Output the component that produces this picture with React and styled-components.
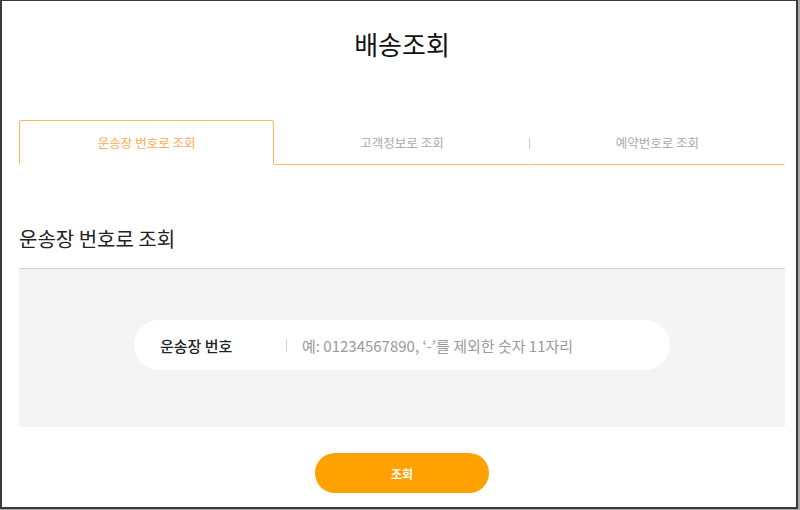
import React, { useState } from "react";
import styled, { createGlobalStyle } from "styled-components";

const FONT = `"Noto Sans CJK KR", "Noto Sans", sans-serif`;

const TABS = ["운송장 번호로 조회", "고객정보로 조회", "예약번호로 조회"];

const GlobalStyle = createGlobalStyle`
  html, body {
    margin: 0;
    padding: 0;
    background: #a8a8a8;
  }
  body {
    font-family: ${FONT};
  }
  * {
    box-sizing: border-box;
  }
`;

const App = () => {
  const [active, setActive] = useState(0);
  return (
    <>
      <GlobalStyle />
      <Frame>
        <Title>배송조회</Title>
        <TabBar>
          {TABS.map((label, i) => (
            <Tab
              key={label}
              active={i === active}
              divider={i === 2 && active !== 1 && active !== 2}
              onClick={() => setActive(i)}
            >
              {label}
            </Tab>
          ))}
        </TabBar>
        <Heading>운송장 번호로 조회</Heading>
        <SearchBox>
          <Pill>
            <Label>운송장 번호</Label>
            <Separator />
            <Input placeholder="예: 01234567890, ‘-’를 제외한 숫자 11자리" />
          </Pill>
        </SearchBox>
        <Actions>
          <SubmitButton>조회</SubmitButton>
        </Actions>
      </Frame>
    </>
  );
};

const Frame = styled.div`
  width: 798px;
  height: 509px;
  background: #fff;
  border: 2px solid #3a3a3a;
  border-top-width: 1px;
  padding: 0 11px 0 17px;
  display: flex;
  flex-direction: column;
`;

const Title = styled.h1`
  margin: 0;
  padding-top: 27px;
  font-size: 26px;
  line-height: 32px;
  font-weight: 400;
  color: #111;
  text-align: center;
`;

const TabBar = styled.div`
  display: flex;
  margin-top: 60px;
`;

const Tab = styled.div`
  position: relative;
  flex: 1;
  height: 45px;
  display: flex;
  align-items: center;
  justify-content: center;
  font-size: 12.5px;
  cursor: pointer;
  color: ${({ active }) => (active ? "#ffa94d" : "#a9a9a9")};
  border: 1px solid ${({ active }) => (active ? "#ffb65c" : "transparent")};
  border-bottom: 1px solid ${({ active }) => (active ? "#fff" : "#ffb65c")};
  border-radius: ${({ active }) => (active ? "3px 3px 0 0" : "0")};

  &::before {
    content: "";
    display: ${({ divider }) => (divider ? "block" : "none")};
    position: absolute;
    left: -2px;
    top: 17px;
    width: 1px;
    height: 11px;
    background: #c8c8c8;
  }
`;

const Heading = styled.h2`
  margin: 60px 0 0;
  padding-bottom: 15px;
  font-size: 20px;
  line-height: 28px;
  font-weight: 400;
  color: #222;
`;

const SearchBox = styled.div`
  height: 159px;
  border-top: 1px solid #cfcfcf;
  background: #f4f4f4;
  display: flex;
  justify-content: center;
  padding-top: 51px;
`;

const Pill = styled.div`
  width: 536px;
  height: 50px;
  border-radius: 25px;
  background: #fff;
  display: flex;
  align-items: center;
  padding-left: 26px;
`;

const Label = styled.span`
  width: 126px;
  font-size: 15px;
  font-weight: 500;
  color: #222;
`;

const Separator = styled.span`
  width: 1px;
  height: 13px;
  background: #d4d4d4;
`;

const Input = styled.input`
  flex: 1;
  margin-left: 15px;
  border: none;
  outline: none;
  background: transparent;
  font-family: ${FONT};
  font-size: 15px;
  color: #333;
  padding: 0;

  &::placeholder {
    color: #9a9a9a;
  }
`;

const Actions = styled.div`
  display: flex;
  justify-content: center;
  padding-top: 26px;
`;

const SubmitButton = styled.button`
  width: 174px;
  height: 40px;
  border: none;
  border-radius: 20px;
  background: #ffa200;
  color: #fff;
  font-family: ${FONT};
  font-size: 12px;
  font-weight: 700;
  cursor: pointer;
`;

export default App;
